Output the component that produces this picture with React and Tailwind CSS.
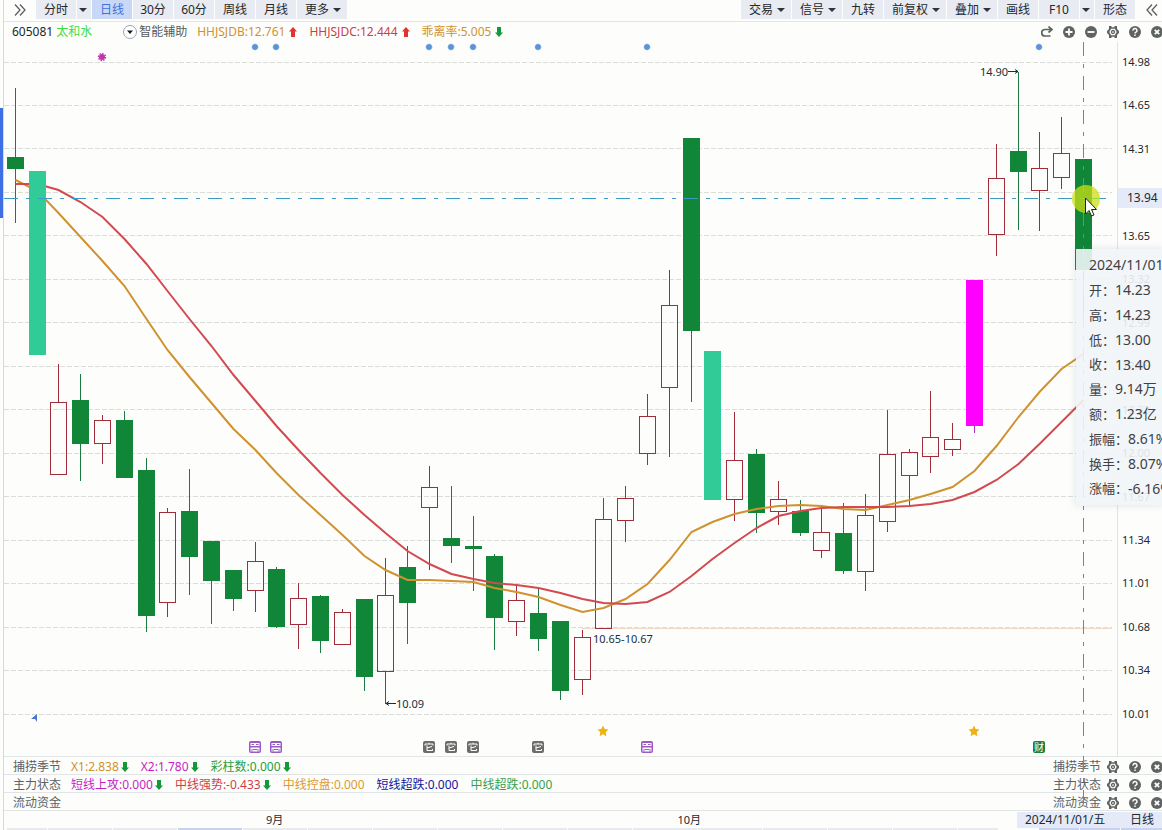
import React from "react";

// [kind, high, top, bottom, low], one entry per trading day
const candles = [
  ["down", 88, 157, 169, 223],
  ["teal", 171, 171, 355, 355],
  ["up", 364, 402, 475, 475],
  ["down", 374, 400, 444, 481],
  ["up", 415, 420, 444, 464],
  ["down", 411, 420, 478, 478],
  ["down", 458, 470, 616, 632],
  ["up", 508, 512, 603, 617],
  ["down", 469, 511, 557, 595],
  ["down", 541, 541, 581, 624],
  ["down", 570, 570, 599, 611],
  ["up", 542, 561, 591, 612],
  ["down", 567, 569, 627, 628],
  ["up", 583, 598, 625, 649],
  ["down", 595, 596, 641, 653],
  ["up", 609, 612, 645, 645],
  ["down", 599, 599, 677, 691],
  ["up", 558, 595, 672, 704],
  ["down", 546, 567, 603, 644],
  ["up", 466, 487, 508, 570],
  ["down", 486, 538, 546, 563],
  ["down", 516, 546, 549, 591],
  ["down", 554, 556, 618, 650],
  ["up", 586, 600, 622, 636],
  ["down", 588, 613, 639, 651],
  ["down", 621, 621, 691, 700],
  ["up", 630, 637, 680, 695],
  ["up", 498, 519, 629, 629],
  ["up", 486, 498, 521, 542],
  ["up", 394, 416, 454, 465],
  ["up", 270, 305, 388, 457],
  ["down", 138, 138, 331, 402],
  ["teal", 351, 351, 500, 500],
  ["up", 412, 460, 500, 521],
  ["down", 449, 454, 513, 533],
  ["up", 481, 499, 512, 525],
  ["down", 500, 511, 533, 536],
  ["up", 508, 532, 551, 558],
  ["down", 503, 533, 571, 574],
  ["up", 494, 515, 572, 591],
  ["up", 410, 454, 522, 532],
  ["up", 449, 452, 476, 506],
  ["up", 391, 437, 457, 473],
  ["up", 423, 439, 450, 456],
  ["pink", 280, 280, 426, 433],
  ["up", 144, 178, 235, 256],
  ["down", 72, 151, 172, 230],
  ["up", 132, 168, 191, 231],
  ["up", 117, 153, 178, 189],
  ["down", 159, 159, 270, 322],
];

const fastLine = [
  180, 191, 213, 237, 261, 286, 319, 350, 377, 403, 429, 450, 473, 495, 515, 535, 556, 570, 580, 580,
  581, 582, 588, 592, 597, 605, 612, 608, 599, 584, 560, 532, 522, 514, 509, 506, 505, 506, 509, 510,
  505, 500, 494, 487, 471, 446, 417, 392, 369, 354,
];

const slowLine = [
  184, 184, 190, 202, 217, 239, 264, 291, 319, 346, 375, 401, 426, 450, 473, 495, 515, 533, 551, 564,
  574, 579, 583, 585, 588, 593, 599, 603, 604, 602, 592, 576, 559, 543, 528, 516, 511, 508, 507, 507,
  507, 506, 504, 500, 492, 480, 464, 444, 422, 400,
];

const prices = [
  "14.98", "14.65", "14.31", "13.97", "13.65", "13.32", "12.99", "12.66",
  "12.33", "12.00", "11.67", "11.34", "11.01", "10.68", "10.34", "10.01",
];

const dayX = (i) => Math.floor(15.3 + i * 21.8) + 0.5;
const toPoints = (ys) => ys.map((y, i) => `${dayX(i)},${y}`).join(" ");

const fills = { down: "#118538", teal: "#31cb97", pink: "#ff00ff" };
const wicks = { down: "#1c7a44", teal: "#31cb97", pink: "#b02cc0" };

const Candle = ({ x, kind, high, top, bottom, low }) => {
  if (kind === "up") {
    return (
      <g stroke="#a02c3c" fill="none">
        <path d={`M${x} ${high}V${top}M${x} ${bottom}V${low}`} />
        <rect x={x - 8} y={top + 0.5} width="16" height={bottom - top - 1} />
      </g>
    );
  }
  return (
    <g>
      <path d={`M${x} ${high}V${low}`} stroke={wicks[kind]} />
      <rect x={x - 8.5} y={top} width="17" height={bottom - top} fill={fills[kind]} />
    </g>
  );
};

const Star = ({ x, y }) => (
  <path
    transform={`translate(${x} ${y})`}
    d="M0-5.5 1.7-1.9 5.5-1.4 2.7 1.3 3.4 5.2 0 3.3-3.4 5.2-2.7 1.3-5.5-1.4-1.7-1.9Z"
    fill="#efb212"
  />
);

const Badge = ({ x, color, children }) => (
  <g transform={`translate(${x} 741)`}>
    <rect width="12" height="12" rx="2" fill={color} />
    {children}
  </g>
);

const RobotBadge = ({ x }) => (
  <Badge x={x} color="#9b59c4">
    <path d="M1.5 2h9v3h-9z M1.500 6.500h9v4h-9z" fill="#fff" />
    <path d="M2.500 3.500H5M7 3.500H9.500M4 8.500H8" stroke="#9b59c4" />
    <path d="M3 8V10.500M9 8V10.500" stroke="#9b59c4" />
  </Badge>
);

const NoteBadge = ({ x }) => (
  <Badge x={x} color="#6b6d6d">
    <path d="M2 4.5V3H10v1.5M4 4.5V9.5H9.5V8M4 7 9 5.5M6 1.8V3" stroke="#fff" fill="none" />
  </Badge>
);

const Chart = () => {
  const days = candles.map(([kind, high, top, bottom, low], i) => ({
    x: dayX(i), kind, high, top, bottom, low,
  }));
  const behind = days.filter((d) => d.kind === "up" || d.kind === "down");
  const front = days.filter((d) => d.kind === "teal" || d.kind === "pink");

  return (
    <svg viewBox="4 42 1113 714" className="pointer-events-none relative block w-full overflow-visible">
      {prices.map((p, i) => (
        <path key={p} d={`M4 ${Math.floor(62 + i * 43.47) + 0.5}H1112`} stroke="#d9dedb" strokeDasharray="5 2" />
      ))}
      <path d="M582 628.5H1112" stroke="#f0d9c8" />

      {behind.map((d) => <Candle key={d.x} {...d} />)}
      <polyline points={toPoints(fastLine)} fill="none" stroke="#cf922f" strokeWidth="2" />
      <polyline points={toPoints(slowLine)} fill="none" stroke="#d24a50" strokeWidth="2" />
      {front.map((d) => <Candle key={d.x} {...d} />)}

      {[255, 276, 429, 451, 473, 538, 647, 1039].map((x) => (
        <g key={x}>
          <circle cx={x} cy="47" r="3" fill="#5b93d8" />
          <circle cx={x} cy="47" r="3" fill="none" stroke="#8bb6ea" strokeDasharray="1 1" />
        </g>
      ))}
      <circle cx="102" cy="57" r="3" fill="#c035ab" />
      <circle cx="102" cy="57" r="3.5" fill="none" stroke="#c035ab" strokeWidth="1.5" strokeDasharray="1.4 1.3" />

      {/* annotations */}
      <g fontSize="11" fill="#14303f">
        <text x="980" y="76">14.90</text>
        <text x="593" y="643">10.65-10.67</text>
        <text x="396" y="708">10.09</text>
      </g>
      <path d="M1008 71.5H1018M1015 69.5 1018 71.5 1015 73.5M396 703.5H386M389 701.5 386 703.5 389 705.5" stroke="#14303f" fill="none" />

      <path d="M31 719 37 714V722L35 719Z" fill="#4a76c9" />
      <Star x={603} y={731} />
      <Star x={974} y={731} />
      {[249, 270, 641].map((x) => <RobotBadge key={x} x={x} />)}
      {[423, 445, 467, 532].map((x) => <NoteBadge key={x} x={x} />)}
      <Badge x={1033} color="#16803c">
        <text x="1" y="10" fontSize="10" fill="#fff">财</text>
      </Badge>

      {/* crosshair */}
      <g stroke="#3c9ac2" strokeDasharray="14 8 4 8">
        <path d="M4 198.5H1110" />
        <path d="M1083.5 42V805" />
      </g>
      <circle cx="1086" cy="199" r="14" fill="#c9e014" opacity="0.75" />
      <path d="M1085.5 198V214L1089 210.5 1091.5 216 1094 215 1091.5 209.5H1096.5Z" fill="#fff" stroke="#222" />
    </svg>
  );
};

const details = [
  ["开", "14.23"],
  ["高", "14.23"],
  ["低", "13.00"],
  ["收", "13.40"],
  ["量", "9.14万"],
  ["额", "1.23亿"],
  ["振幅", "8.61%"],
  ["换手", "8.07%"],
  ["涨幅", "-6.16%"],
];

const DayTooltip = () => (
  <div className="absolute top-[207px] right-0 grid h-[256px] w-[86px] auto-rows-fr overflow-hidden bg-[#f1f5f8]/90 py-1 pl-[13px] text-sm whitespace-nowrap text-[#3d4145] shadow-[0_0_6px_2px_rgba(90,110,120,0.12)]">
    <div className="flex items-center">2024/11/01</div>
    {details.map(([label, value]) => (
      <div key={label} className="flex items-center">
        <span className="text-[13px]">{label}：</span>
        <span>{value}</span>
      </div>
    ))}
  </div>
);

const Caret = () => (
  <svg viewBox="0 0 8 4" className="h-1 w-2 shrink-0">
    <path d="M0 0h8L4 4z" fill="#30343a" />
  </svg>
);

const Tab = ({ children, caret, active }) => (
  <button
    className={
      active
        ? "flex h-[19px] w-10 items-center justify-center bg-[#c8d8f6] text-[#4272d8]"
        : caret
          ? "flex h-[19px] items-center gap-1 bg-[#e9ebf2] pr-1.5 pl-2"
          : "flex h-[19px] w-10 items-center justify-center bg-[#e9ebf2]"
    }
  >
    {children}
    {caret && <Caret />}
  </button>
);

const CaretTab = ({ label }) => (
  <button aria-label={label} className="flex h-[19px] w-[14px] items-center bg-[#e9ebf2] pl-[2px]">
    <Caret />
  </button>
);

const Toolbar = () => (
  <header className="flex h-[22px] items-start justify-between border-b border-[#e3e6e8] text-[#24282d]">
    <div className="flex gap-px">
      <button aria-label="展开" className="flex h-[19px] w-[31px] items-center justify-center">
        <svg viewBox="0 0 12 12" className="size-3" fill="none" stroke="#5c6064" strokeWidth="1.3">
          <path d="M1 0.5 6 6 1 11.5M6 0.5 11 6 6 11.5" />
        </svg>
      </button>
      <Tab>分时</Tab>
      <CaretTab label="分时选项" />
      <Tab active>日线</Tab>
      <Tab>30分</Tab>
      <Tab>60分</Tab>
      <Tab>周线</Tab>
      <Tab>月线</Tab>
      <Tab caret>更多</Tab>
    </div>
    <div className="flex gap-px">
      <Tab caret>交易</Tab>
      <Tab caret>信号</Tab>
      <Tab>九转</Tab>
      <Tab caret>前复权</Tab>
      <Tab caret>叠加</Tab>
      <Tab>画线</Tab>
      <Tab>F10</Tab>
      <CaretTab label="F10选项" />
      <Tab>形态</Tab>
      <button aria-label="收起" className="flex h-[19px] w-[26px] items-center justify-end pr-1">
        <svg viewBox="0 0 12 12" className="size-3" fill="none" stroke="#5c6064" strokeWidth="1.3">
          <path d="M6 0.5 1 6 6 11.5M11 0.5 6 6 11 11.5" />
        </svg>
      </button>
    </div>
  </header>
);

const iconShapes = {
  redo: <path d="M10 3.5H4A2.7 2.7 0 0 0 4 10H9.5M7.5 0.5 11 3.5 7.5 6.5" fill="none" stroke="#5f6361" strokeWidth="1.7" />,
  plus: (
    <>
      <circle cx="6" cy="6" r="6" fill="#5f6361" />
      <path d="M2.5 6h7M6 2.5v7" stroke="#fff" strokeWidth="1.8" />
    </>
  ),
  minus: (
    <>
      <circle cx="6" cy="6" r="6" fill="#5f6361" />
      <path d="M2.5 6h7" stroke="#fff" strokeWidth="1.8" />
    </>
  ),
  gear: (
    <>
      <path d="M2 0H4.5V1.2H7.5V0H10V2.5L11 4.500H12V7.500H11L10 9.500V12H7.500V10.800H4.500V12H2V9.500L1 7.500H0V4.500H1L2 2.500Z" fill="#5f6361" />
      <path d="M4.2 2.8H7.8L9.700 6 7.800 9.200H4.200L2.300 6Z" fill="#fff" />
      <circle cx="6" cy="6" r="1.5" fill="none" stroke="#5f6361" strokeWidth="1.3" />
    </>
  ),
  help: (
    <>
      <circle cx="6" cy="6" r="6" fill="#5f6361" />
      <path d="M4 4.6A2 1.9 0 1 1 7 6.1Q6 6.500 6 7.500M6 8.500V10" fill="none" stroke="#fff" strokeWidth="1.5" />
    </>
  ),
  close: (
    <>
      <circle cx="6" cy="6" r="6" fill="#5f6361" />
      <path d="M3.8 3.8 8.2 8.2M8.2 3.8 3.8 8.2" stroke="#fff" strokeWidth="1.8" />
    </>
  ),
};

const IconRow = ({ names }) => (
  <div className="-mr-px flex gap-[10px]">
    {names.map((name) => (
      <button key={name} aria-label={name} className="size-3">
        <svg viewBox="0 0 12 12" className="size-3">{iconShapes[name]}</svg>
      </button>
    ))}
  </div>
);

const Arrow = ({ up }) => (
  <svg viewBox="0 0 8 10" className="h-[10px] w-2 shrink-0">
    {up ? (
      <path d="M4 0 8 4.5H6V10H2V4.5H0Z" fill="#e0352f" />
    ) : (
      <path d="M4 10 8 5.5H6V0H2V5.5H0Z" fill="#14993a" />
    )}
  </svg>
);

const InfoRow = () => (
  <div className="flex h-5 items-center justify-between pl-2">
    <div className="flex items-center">
      <span className="text-[#22262a]">605081</span>
      <span className="ml-[3px] text-[#3fdc3f]">太和水</span>
      <button className="ml-[31px] flex items-center gap-[2px] text-[#55595d]">
        <svg viewBox="0 0 14 14" className="size-[14px]">
          <circle cx="7" cy="7" r="6.5" fill="#fff" stroke="#9aa4bb" />
          <path d="M4 5.5h6L7 9z" fill="#1a1a1a" />
        </svg>
        智能辅助
      </button>
      <div className="ml-[10px] flex gap-3">
        <span className="flex items-center gap-1 text-[#cf922f]">HHJSJDB:12.761<Arrow up /></span>
        <span className="flex items-center gap-1 text-[#cc3e48]">HHJSJDC:12.444<Arrow up /></span>
        <span className="flex items-center gap-1 text-[#cf922f]">乖离率:5.005<Arrow /></span>
      </div>
    </div>
    <IconRow names={["redo", "plus", "minus", "gear", "help", "close"]} />
  </div>
);

const PriceAxis = () => (
  <div className="relative flex w-[45px] shrink-0 flex-col justify-between border-l border-[#e1e4e6] pt-3 pb-[34px] pl-1 text-[11px] leading-4 text-[#24292e]">
    {prices.map((p) => <span key={p}>{p}</span>)}
    <div className="absolute top-[146px] right-0 left-0 h-5 bg-[#e5eaf8] pl-[9px] text-xs leading-5">13.94</div>
  </div>
);

const IndicatorRow = ({ name, children }) => (
  <div className="flex h-[18px] items-center justify-between border-t border-[#e1e5e5] pt-[2px] pl-[9px] text-[#5b5f63]">
    <div className="flex items-center gap-[10px]">
      <span>{name}</span>
      <div className="flex items-center gap-3">{children}</div>
    </div>
    <div className="flex items-center gap-[6px]">
      <span>{name}</span>
      <IconRow names={["gear", "help", "close"]} />
    </div>
  </div>
);

const App = () => {
  return (
    <div className="flex min-h-screen overflow-hidden bg-[#fdfefc] font-['Noto_Sans','Noto_Sans_CJK_SC',sans-serif] text-xs leading-4 whitespace-nowrap">
      <aside className="w-1 shrink-0 border-r border-[#d5d8e2] pt-[108px]">
        <div className="h-[110px] bg-[#3f6fe4]" />
      </aside>

      <main className="flex min-w-0 flex-1 flex-col">
        <Toolbar />
        <InfoRow />

        <section className="relative flex">
          <div className="min-w-0 flex-1">
            <Chart />
          </div>
          <PriceAxis />
          <DayTooltip />
        </section>

        <IndicatorRow name="捕捞季节">
          <span className="flex items-center gap-[2px] text-[#cf922f]">X1:2.838<Arrow /></span>
          <span className="flex items-center gap-[2px] text-[#c41fc4]">X2:1.780<Arrow /></span>
          <span className="flex items-center gap-[2px] text-[#27a03a]">彩柱数:0.000<Arrow /></span>
        </IndicatorRow>
        <IndicatorRow name="主力状态">
          <span className="flex items-center gap-[2px] text-[#c41fc4]">短线上攻:0.000<Arrow /></span>
          <span className="flex items-center gap-[2px] text-[#cc3e48]">中线强势:-0.433<Arrow /></span>
          <span className="text-[#dd9a2e]">中线控盘:0.000</span>
          <span className="text-[#1414a0]">短线超跌:0.000</span>
          <span className="text-[#35a048]">中线超跌:0.000</span>
        </IndicatorRow>
        <IndicatorRow name="流动资金" />

        <footer className="flex h-[18px] items-center border-t border-[#e1e5e5] text-[11px] text-[#24292e]">
          <span className="w-[37%] pl-[262px]">9月</span>
          <span className="flex-1 pl-[245px]">10月</span>
          <span className="flex h-4 w-[100px] items-center bg-[#e5eaf8] pl-2 text-xs">2024/11/01/五</span>
          <span className="flex h-4 w-[45px] items-center bg-[#e5eaf8] pl-[13px] text-xs">日线</span>
        </footer>
        <div className="flex h-[2px] gap-px pl-[3px]">
          <div className="w-10 bg-[#e8eaed]" />
          {Array.from({ length: 14 }, (_, i) => (
            <div key={i} className={i === 2 ? "w-16 bg-[#c8d2ef]" : "w-16 bg-[#e8eaed]"} />
          ))}
          <div className="w-10 bg-[#e8eaed]" />
          <div className="ml-10 w-10 bg-[#c8d2ef]" />
          <div className="w-10 bg-[#c8d2ef]" />
          <div className="flex-1 bg-[#c8d2ef]" />
        </div>
      </main>
    </div>
  );
};

export default App;
